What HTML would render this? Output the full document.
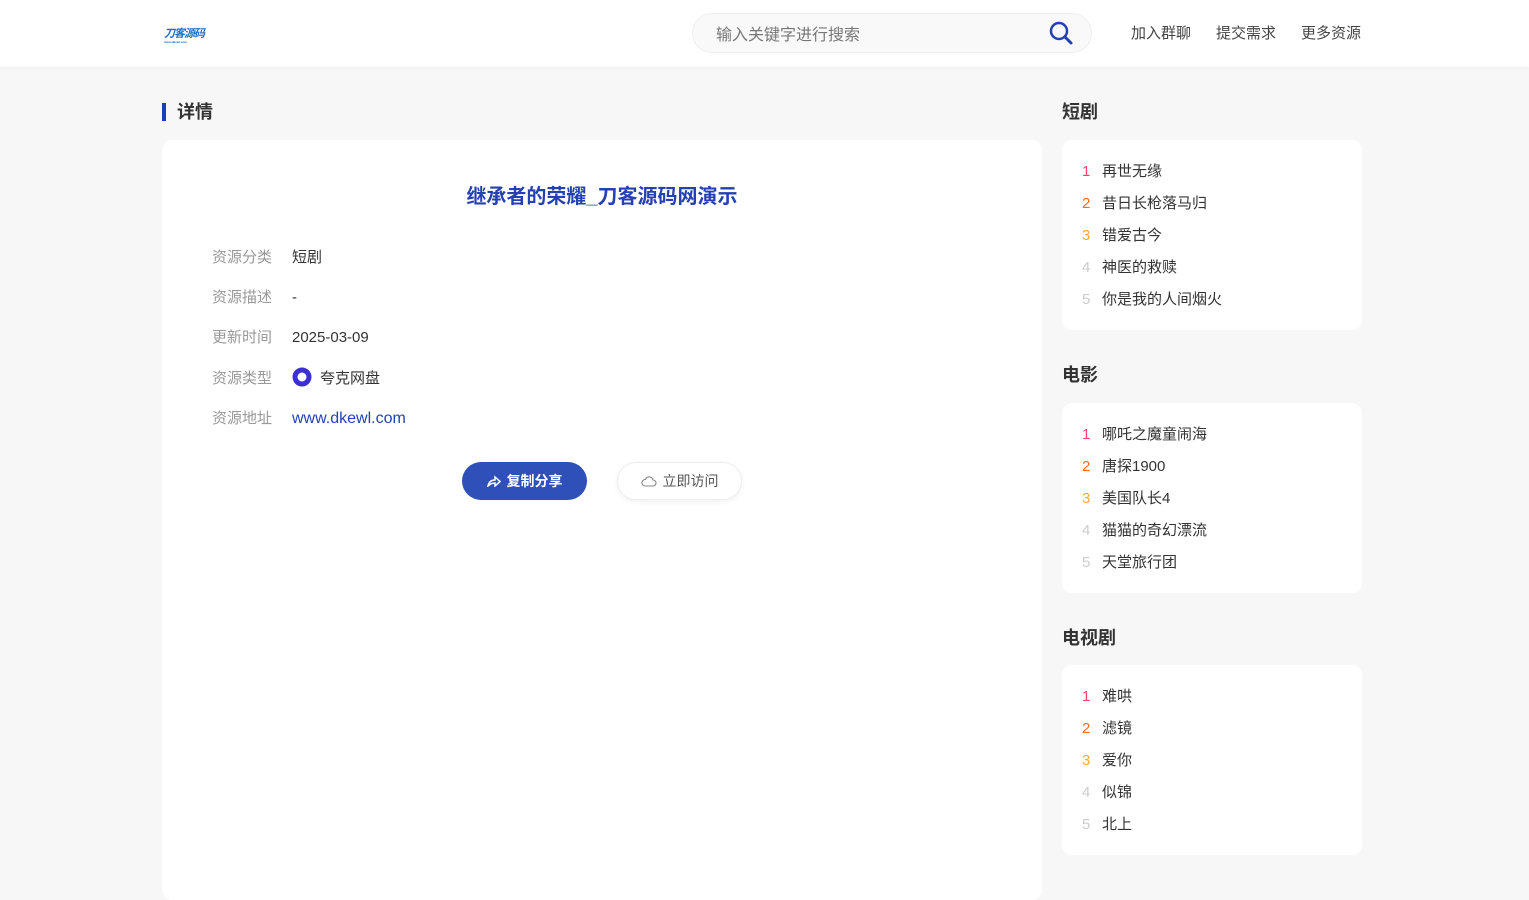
<!DOCTYPE html>
<html><head><meta charset="utf-8"><style>
*{margin:0;padding:0;box-sizing:border-box}
body{width:1529px;height:878px;overflow:hidden;background:#f7f7f7;font-family:"Liberation Sans","Noto Sans CJK SC",sans-serif;color:#333;position:relative}
.hd{position:absolute;left:0;top:0;width:1529px;height:67px;background:#fff;box-shadow:0 1px 3px rgba(0,0,0,.04)}
.logo{position:absolute;left:164px;top:25px;color:#1f6bc4;font-weight:bold;font-size:11px;letter-spacing:-1px;font-style:italic}
.logo small{display:block;font-size:3px;letter-spacing:0;color:#1f6bc4;margin-top:-1px}
.search{position:absolute;left:692px;top:13px;width:400px;height:40px;border-radius:20px;background:#f9f9f9;border:1px solid #eee}
.search span{position:absolute;left:23px;top:7px;font-size:16px;color:#777}
.search svg{position:absolute;left:355px;top:6px}
.nav{position:absolute;top:22px;font-size:15px;color:#444}
.sec{position:absolute;font-size:18px;font-weight:bold;color:#333}
.bar{position:absolute;left:162px;top:103px;width:4px;height:18px;background:#1a3eb8}
.main{position:absolute;left:162px;top:140px;width:880px;height:760px;background:#fff;border-radius:10px}
.title{position:absolute;left:0;width:880px;top:40px;text-align:center;font-size:20px;font-weight:bold;color:#2440b3}
.row{position:absolute;left:50px;font-size:15px}
.row .k{color:#999;display:inline-block;width:80px}
.row .v{color:#333}
.btn1{position:absolute;left:300px;top:322px;width:125px;height:38px;border-radius:19px;background:#2e50b8;color:#fff;font-size:14px;font-weight:bold;text-align:center;line-height:38px}
.btn2{position:absolute;left:455px;top:322px;width:125px;height:38px;border-radius:19px;background:#fff;border:1px solid #eee;box-shadow:0 2px 6px rgba(0,0,0,.06);color:#555;font-size:14px;text-align:center;line-height:36px}
.card{position:absolute;left:1062px;width:300px;height:190px;background:#fff;border-radius:10px}
.card div{position:absolute;left:20px;font-size:15px;color:#333}
.card b{font-weight:normal;display:inline-block;width:20px;color:#ccc}
</style></head><body>
<div class="hd">
<div class="logo">刀客源码<small>www.dkewl.com</small></div>
<div class="search"><span>输入关键字进行搜索</span>
<svg width="26" height="26" viewBox="0 0 26 26"><circle cx="11" cy="11" r="8" fill="none" stroke="#2440b3" stroke-width="2.5"/><path d="M17 17l6 6" stroke="#2440b3" stroke-width="3" stroke-linecap="round"/></svg></div>
<div class="nav" style="left:1131px">加入群聊</div>
<div class="nav" style="left:1216px">提交需求</div>
<div class="nav" style="left:1301px">更多资源</div>
</div>
<div class="bar"></div>
<div class="sec" style="left:177px;top:98px">详情</div>
<div class="main">
<div class="title">继承者的荣耀_刀客源码网演示</div>
<div class="row" style="top:106px"><span class="k">资源分类</span><span class="v">短剧</span></div>
<div class="row" style="top:146px"><span class="k">资源描述</span><span class="v">-</span></div>
<div class="row" style="top:186px"><span class="k">更新时间</span><span class="v">2025-03-09</span></div>
<div class="row" style="top:227px"><span class="k">资源类型</span><span class="v"><svg width="20" height="20" viewBox="0 0 20 20" style="vertical-align:-4px;margin-right:8px"><circle cx="10" cy="10" r="7" fill="none" stroke="#3d2fd6" stroke-width="5"/></svg>夸克网盘</span></div>
<div class="row" style="top:267px"><span class="k">资源地址</span><span class="v" style="color:#2440b3;font-size:16px">www.dkewl.com</span></div>
<div class="btn1"><svg width="14" height="12" viewBox="0 0 14 12" style="vertical-align:-1px;margin-right:6px"><path d="M1 11C2 6 5 5 8 5V2l5 4.5L8 11V8C5 8 3 9 1 11z" fill="none" stroke="#fff" stroke-width="1.5"/></svg>复制分享</div>
<div class="btn2"><svg width="16" height="12" viewBox="0 0 16 12" style="vertical-align:-1px;margin-right:6px"><path d="M4 11h8a3 3 0 0 0 0-6 4 4 0 0 0-7.6-.5A3.2 3.2 0 0 0 4 11z" fill="none" stroke="#888" stroke-width="1.1"/></svg>立即访问</div>
</div>
<div class="sec" style="left:1062px;top:98px">短剧</div>
<div class="card" style="top:140px">
<div style="top:20px"><b style="color:#f5436a">1</b>再世无缘</div>
<div style="top:52px"><b style="color:#ff6a1a">2</b>昔日长枪落马归</div>
<div style="top:84px"><b style="color:#ffa83a">3</b>错爱古今</div>
<div style="top:116px"><b>4</b>神医的救赎</div>
<div style="top:148px"><b>5</b>你是我的人间烟火</div>
</div>
<div class="sec" style="left:1062px;top:361px">电影</div>
<div class="card" style="top:403px">
<div style="top:20px"><b style="color:#f5436a">1</b>哪吒之魔童闹海</div>
<div style="top:52px"><b style="color:#ff6a1a">2</b>唐探1900</div>
<div style="top:84px"><b style="color:#ffa83a">3</b>美国队长4</div>
<div style="top:116px"><b>4</b>猫猫的奇幻漂流</div>
<div style="top:148px"><b>5</b>天堂旅行团</div>
</div>
<div class="sec" style="left:1062px;top:624px">电视剧</div>
<div class="card" style="top:665px">
<div style="top:20px"><b style="color:#f5436a">1</b>难哄</div>
<div style="top:52px"><b style="color:#ff6a1a">2</b>滤镜</div>
<div style="top:84px"><b style="color:#ffa83a">3</b>爱你</div>
<div style="top:116px"><b>4</b>似锦</div>
<div style="top:148px"><b>5</b>北上</div>
</div>
</body></html>
